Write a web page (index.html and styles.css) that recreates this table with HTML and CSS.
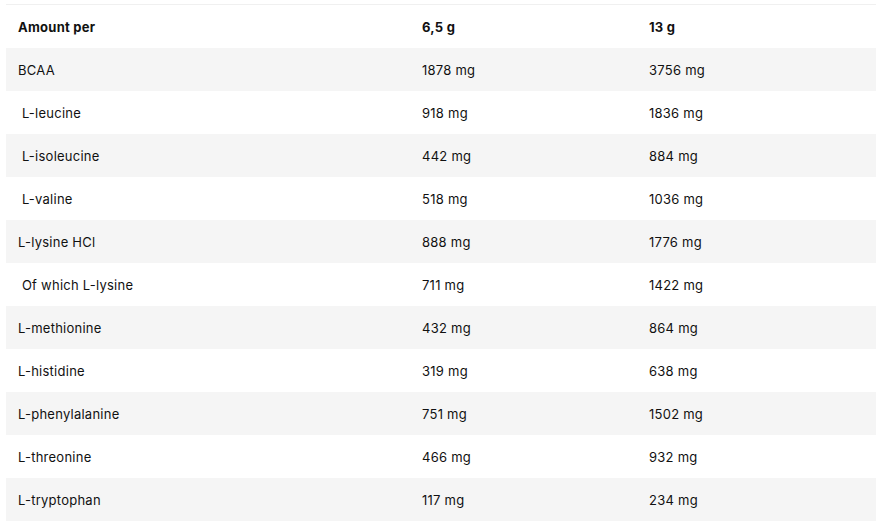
FILE: index.html
```html
<!DOCTYPE html>
<html>
<head>
<meta charset="utf-8">
<link rel="stylesheet" href="styles.css">
</head>
<body>
<table class="nutri">
  <colgroup>
    <col class="c1"><col class="c2"><col class="c3">
  </colgroup>
  <thead>
    <tr><th>Amount per</th><th>6,5 g</th><th>13 g</th></tr>
  </thead>
  <tbody>
    <tr><td>BCAA</td><td>1878 mg</td><td>3756 mg</td></tr>
    <tr><td>&nbsp;L-leucine</td><td>918 mg</td><td>1836 mg</td></tr>
    <tr><td>&nbsp;L-isoleucine</td><td>442 mg</td><td>884 mg</td></tr>
    <tr><td>&nbsp;L-valine</td><td>518 mg</td><td>1036 mg</td></tr>
    <tr><td>L-lysine HCl</td><td>888 mg</td><td>1776 mg</td></tr>
    <tr><td>&nbsp;Of which L-lysine</td><td>711 mg</td><td>1422 mg</td></tr>
    <tr><td>L-methionine</td><td>432 mg</td><td>864 mg</td></tr>
    <tr><td>L-histidine</td><td>319 mg</td><td>638 mg</td></tr>
    <tr><td>L-phenylalanine</td><td>751 mg</td><td>1502 mg</td></tr>
    <tr><td>L-threonine</td><td>466 mg</td><td>932 mg</td></tr>
    <tr><td>L-tryptophan</td><td>117 mg</td><td>234 mg</td></tr>
  </tbody>
</table>
</body>
</html>
```
FILE: styles.css
```css
html, body {
  margin: 0;
  background: #fff;
}
body {
  padding: 4px 13px 0 6px;
  font-family: Inter, "Open Sans", "Liberation Sans", sans-serif;
  font-size: 13px;
  letter-spacing: 0.25px;
  color: #111;
}
.nutri {
  width: 870px;
  border-collapse: collapse;
  table-layout: fixed;
  border-top: 1px solid #f0f0f0;
}
.c1 { width: 404px; }
.c2 { width: 227px; }
.c3 { width: 239px; }
.nutri th,
.nutri td {
  height: 43px;
  padding: 2px 12px 0;
  box-sizing: border-box;
  text-align: left;
  vertical-align: middle;
  white-space: pre;
}
.nutri th {
  font-weight: 700;
}
.nutri td {
  font-weight: 400;
}
.nutri tbody tr:nth-child(odd) {
  background: #f5f5f5;
}
```
